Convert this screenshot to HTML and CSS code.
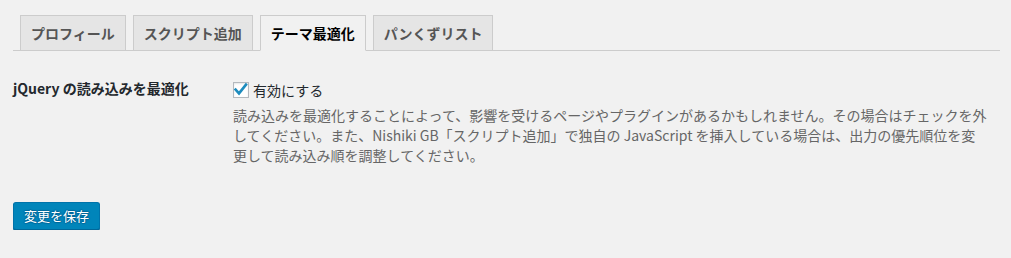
FILE: index.html
```html
<!DOCTYPE html>
<html lang="ja">
<head>
<meta charset="utf-8">
<link rel="stylesheet" href="styles.css">
</head>
<body>
<div class="wrap">
  <nav class="tabs">
    <a class="tab">プロフィール</a>
    <a class="tab">スクリプト追加</a>
    <a class="tab tab-active">テーマ最適化</a>
    <a class="tab">パンくずリスト</a>
  </nav>
  <div class="form-row">
    <div class="form-label">jQuery の読み込みを最適化</div>
    <div class="form-field">
      <label class="check-line">
        <span class="checkbox"><svg width="16" height="16" viewBox="0 0 16 16"><polyline points="2.6,7.6 6,11.4 13,2.6" fill="none" stroke="#1e8cbe" stroke-width="2.6" stroke-linecap="square"/></svg></span>
        <span>有効にする</span>
      </label>
      <p class="description">読み込みを最適化することによって、影響を受けるページやプラグインがあるかもしれません。その場合はチェックを外<br>してください。また、Nishiki GB「スクリプト追加」で独自の JavaScript を挿入している場合は、出力の優先順位を変<br>更して読み込み順を調整してください。</p>
    </div>
  </div>
  <div class="actions">
    <button class="button-primary">変更を保存</button>
  </div>
</div>
</body>
</html>
```

FILE: styles.css
```css
html, body {
  margin: 0;
  padding: 0;
  background: #f1f1f1;
}
body {
  font-family: "Noto Sans CJK JP", "Liberation Sans", sans-serif;
  color: #23282d;
}
.wrap {
  padding: 0 11px 0 13px;
}
.tabs {
  display: flex;
  gap: 7px;
  padding: 15px 0 0 7px;
  border-bottom: 1px solid #ccc;
}
.tab {
  display: block;
  padding: 5px 10px;
  font-size: 14px;
  line-height: 24px;
  font-weight: 700;
  color: #555;
  background: #e5e5e5;
  border: 1px solid #ccc;
  border-bottom: none;
  margin-bottom: 0;
}
.tab-active {
  background: #f1f1f1;
  color: #000;
  border-bottom: 1px solid #f1f1f1;
  margin-bottom: -1px;
}
.form-row {
  display: flex;
  margin-top: 29px;
}
.form-label {
  width: 220px;
  flex: none;
  font-size: 14px;
  line-height: 16px;
  font-weight: 700;
  color: #23282d;
}
.form-field {
  flex: 1;
  min-width: 0;
  padding-right: 10px;
}
.check-line {
  display: flex;
  align-items: center;
  gap: 4px;
  height: 20px;
  font-size: 14px;
  color: #23282d;
}
.checkbox {
  width: 14px;
  height: 14px;
  border: 1px solid #b4b9be;
  background: #fff;
  box-shadow: inset 0 1px 2px rgba(0,0,0,0.1);
  position: relative;
  flex: none;
}
.checkbox svg {
  position: absolute;
  left: -1px;
  top: -1px;
}
.description {
  margin: 5px 0 0;
  font-size: 14px;
  line-height: 20px;
  color: #666;
  white-space: nowrap;
}
.actions {
  margin-top: 37px;
}
.button-primary {
  font-family: "Noto Sans CJK JP", "Liberation Sans", sans-serif;
  font-size: 13px;
  line-height: 26px;
  height: 28px;
  padding: 0 10px 1px;
  color: #fff;
  background: #0085ba;
  border: 1px solid #0073aa;
  border-bottom-color: #006799;
  border-radius: 3px;
  box-shadow: 0 1px 0 #006799;
  text-shadow: 0 -1px 1px #006799, 1px 0 1px #006799, 0 1px 1px #006799, -1px 0 1px #006799;
  cursor: pointer;
}
```
